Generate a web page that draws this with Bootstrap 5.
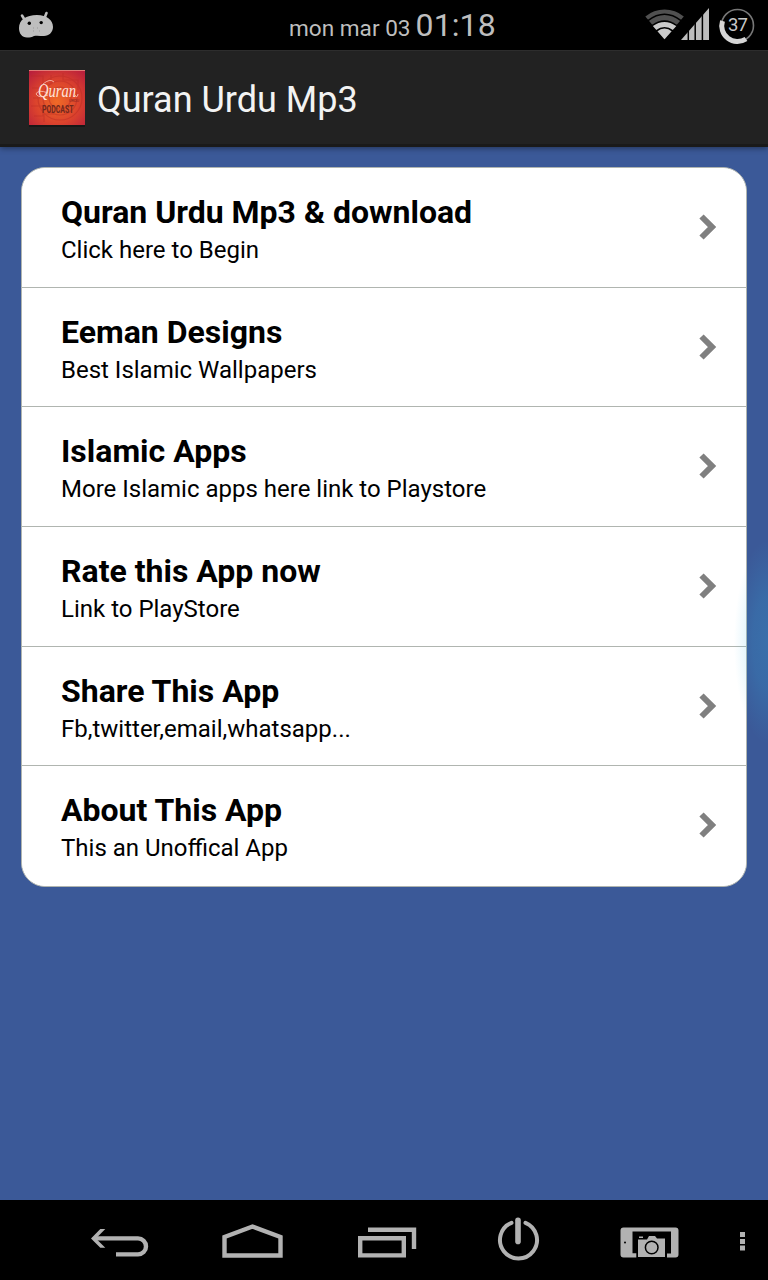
<!DOCTYPE html>
<html lang="en">
<head>
<meta charset="utf-8">
<meta name="viewport" content="width=device-width, initial-scale=1">
<title>Quran Urdu Mp3</title>
<link href="https://cdn.jsdelivr.net/npm/bootstrap@5.3.0/dist/css/bootstrap.min.css" rel="stylesheet">
<style>
  body { font-family: Roboto, "Noto Sans", sans-serif; background: #3b5998; width: 768px; height: 1280px; overflow: hidden; }
  svg { display: block; flex: none; }
  .statusbar { height: 50px; background: #000; color: #bebebe; }
  .clock { padding-left: 236px; line-height: 50px; white-space: nowrap; }
  .clock-date { font-size: 22.6px; }
  .clock-time { font-size: 32px; margin-left: 5px; letter-spacing: .1px; }
  .actionbar { height: 97px; background: #222; border-top: 1px solid #2d2d2d; border-bottom: 3px solid #1a1a1a; box-shadow: 0 1px 6px rgba(0,0,0,.45); padding-left: 27px; }
  .actionbar h1 { font-size: 36px; line-height: 44px; font-weight: 400; color: #f3f3f3; margin: 4px 0 0 10px; }
  .menu-list { margin: 20px 21px 0; height: 720px; border: 1px solid #b0b5b0; border-radius: 24px; background: #fff; overflow: hidden; }
  .menu-list .list-group-item { height: 120px; padding: 25px 28px 0 39px; border: 0; border-bottom: 1px solid #b0b5b0; color: #000; background: #fff; }
  .menu-list .list-group-item:first-child { height: 120px; }
  .menu-list .list-group-item:last-child { border-bottom: 0; }
  .item-title { font-size: 32px; line-height: 38px; font-weight: 700; }
  .item-note { font-size: 24px; line-height: 28px; margin-top: 5px; }
  .chevron { margin-top: 20px; }
  .edge-glow { position: absolute; right: 0; top: 540px; width: 34px; height: 204px; background: radial-gradient(ellipse 34px 102px at 100% 50%, rgba(51,181,229,.24), rgba(51,181,229,.19) 45%, rgba(51,181,229,.04) 88%, transparent); }
  .navkeys { height: 80px; background: #000; }
</style>
</head>
<body class="d-flex flex-column position-relative">
<header>
  <div class="statusbar d-flex">
    <svg width="53" height="50" viewBox="0 0 53 50"><path d="M22 15.5l3 5M46.5 13l-2 5" stroke="#bebebe" stroke-width="2.6" stroke-linecap="round"/><path d="M19 28c0-8 7-13 18-13 10 0 16 5 16 12 0 5-4 9-9 9-4 0-7-.8-10 0-2 1-4 1.5-7 1.5-5 0-8-4-8-9.5z" fill="#bebebe"/><circle cx="29.3" cy="23.3" r="1.7"/><circle cx="41.2" cy="22.6" r="1.7"/><path d="M33 28h1M37 28h1M33 31h1M39 31h1" stroke="#999"/></svg>
    <div class="clock"><span class="clock-date">mon mar 03</span><span class="clock-time">01:18</span></div>
    <svg class="ms-auto" width="130" height="50" viewBox="638 0 130 50">
      <path d="M664.5 39.3L645.3 16.5A30 30 0 0 1 683.8 16.5Z" fill="#505050"/>
      <path d="M664.5 39.3L652.2 25.2Q664.5 17 677 25.2Z" fill="#cacaca"/>
      <g fill="none" stroke="#000" stroke-width="1.6"><path d="M648 20.6Q664.5 8 681 20.6M652 25.7Q664.5 16.5 677 25.7M656.3 31Q664.5 24.5 672.8 31"/></g>
      <path d="M681 40L709 8V40Z" fill="#bebebe"/><path d="M688.3 8v33M695.2 8v33M702.4 8v33" stroke="#000" stroke-width="1.5"/>
      <circle cx="737.5" cy="25.5" r="16" fill="none" stroke="#777" stroke-width="1.6"/>
      <path d="M722.5 21A15.7 15.7 0 0 0 746 39" fill="none" stroke="#d6d6d6" stroke-width="5"/>
      <text x="738" y="31" text-anchor="middle" font-size="18.5" fill="#c8c8c8" textLength="20">37</text>
    </svg>
  </div>
  <div class="actionbar d-flex align-items-center">
    <svg width="60" height="60" viewBox="27 68 60 60">
      <defs><radialGradient id="tile" cx="50%" cy="58%" r="72%"><stop offset="0" stop-color="#ef6a27"/><stop offset=".55" stop-color="#db422d"/><stop offset="1" stop-color="#b91f3c"/></radialGradient></defs>
      <rect x="29" y="71" width="56" height="56" fill="#111" opacity=".6"/>
      <rect x="29" y="70" width="56" height="55" fill="url(#tile)"/>
      <path d="M29 70.5h56" stroke="#e27b77"/>
      <g fill="none" stroke="#b92b25" stroke-width="1.2" opacity=".45"><circle cx="60" cy="98" r="22"/><circle cx="60" cy="98" r="17"/><circle cx="60" cy="98" r="11"/><path d="M31 76h12v8h8v-9M32 88h8v10h-7M31 106h12v10h-9M44 122v-8h10M63 73v7h15v10"/></g>
      <text x="38" y="97" font-family="Liberation Serif" font-style="italic" font-size="18" fill="#ffe4dc" textLength="38" lengthAdjust="spacingAndGlyphs">Quran</text>
      <path d="M43 84Q50 78 54 82M48 93Q38 89 36 94Q39 99 48 95M75 95q2 4 3-1" fill="none" stroke="#ffd8cd" stroke-width=".7"/>
      <text x="69" y="102" font-size="4" fill="#872320" textLength="10">URDU</text>
      <text x="42" y="112.8" font-size="11" font-weight="700" fill="#71271d" textLength="31.5" lengthAdjust="spacingAndGlyphs">PODCAST</text>
    </svg>
    <h1>Quran Urdu Mp3</h1>
  </div>
</header>
<main class="flex-grow-1">
  <div class="list-group menu-list">
    <a class="list-group-item d-flex justify-content-between" href="#"><div><div class="item-title">Quran Urdu Mp3 &amp; download</div><div class="item-note">Click here to Begin</div></div><svg class="chevron" width="20" height="28"><path d="M3.5 3.5L14 14L3.5 24.5" fill="none" stroke="#808080" stroke-width="6"/></svg></a>
    <a class="list-group-item d-flex justify-content-between" href="#"><div><div class="item-title">Eeman Designs</div><div class="item-note">Best Islamic Wallpapers</div></div><svg class="chevron" width="20" height="28"><path d="M3.5 3.5L14 14L3.5 24.5" fill="none" stroke="#808080" stroke-width="6"/></svg></a>
    <a class="list-group-item d-flex justify-content-between" href="#"><div><div class="item-title">Islamic Apps</div><div class="item-note">More Islamic apps here link to Playstore</div></div><svg class="chevron" width="20" height="28"><path d="M3.5 3.5L14 14L3.5 24.5" fill="none" stroke="#808080" stroke-width="6"/></svg></a>
    <a class="list-group-item d-flex justify-content-between" href="#"><div><div class="item-title">Rate this App now</div><div class="item-note">Link to PlayStore</div></div><svg class="chevron" width="20" height="28"><path d="M3.5 3.5L14 14L3.5 24.5" fill="none" stroke="#808080" stroke-width="6"/></svg></a>
    <a class="list-group-item d-flex justify-content-between" href="#"><div><div class="item-title">Share This App</div><div class="item-note">Fb,twitter,email,whatsapp...</div></div><svg class="chevron" width="20" height="28"><path d="M3.5 3.5L14 14L3.5 24.5" fill="none" stroke="#808080" stroke-width="6"/></svg></a>
    <a class="list-group-item d-flex justify-content-between" href="#"><div><div class="item-title">About This App</div><div class="item-note">This an Unoffical App</div></div><svg class="chevron" width="20" height="28"><path d="M3.5 3.5L14 14L3.5 24.5" fill="none" stroke="#808080" stroke-width="6"/></svg></a>
  </div>
</main>
<div class="edge-glow"></div>
<footer class="navkeys">
  <svg width="768" height="80" viewBox="0 0 768 80" fill="none" stroke="#b2b2b2" stroke-width="4.4">
    <path d="M95 38.4h43a7.9 7.9 0 0 1 0 16h-22"/><path d="M91 38.4L100.3 29h5l-9.4 9.4 9.4 9.4h-5z" fill="#b2b2b2" stroke="none"/>
    <path d="M224.5 55.5V37L252.5 26.5L280.5 37V55.5Z"/>
    <path d="M360.2 38.2h43.6v17.2h-43.6zM368 29.7h46V49"/>
    <path d="M511.5 22.8A18.5 18.5 0 1 0 525.5 22.8" stroke-linecap="round" stroke-width="4"/><path d="M518 20.2v21.2" stroke-width="5.6" stroke-linecap="round"/>
    <g stroke="none" fill="#b2b2b2"><path d="M623.5 27.5h52q3 0 3 3V54.500q0 3-3 3h-8.500v-4h4V31.500h-38.500v21.800h3.800v4.200h-12.800q-3 0-3-3V30.500q0-3 3-3z"/><path d="M638 39.500h9l2-3.500h6l2 2.500h8v18.500h-27z"/><path d="M639 36.500h4v1.500h-4z"/><rect x="740" y="32" width="5" height="5"/><rect x="740" y="39" width="5" height="5"/><rect x="740" y="45.500" width="5" height="5"/></g>
    <circle cx="651.700" cy="47.500" r="6.300" stroke="#000" stroke-width="1.500"/><circle cx="625" cy="42.500" r="1" fill="#000" stroke="none"/>
  </svg>
</footer>
<script src="https://cdn.jsdelivr.net/npm/bootstrap@5.3.0/dist/js/bootstrap.bundle.min.js"></script>
</body>
</html>
